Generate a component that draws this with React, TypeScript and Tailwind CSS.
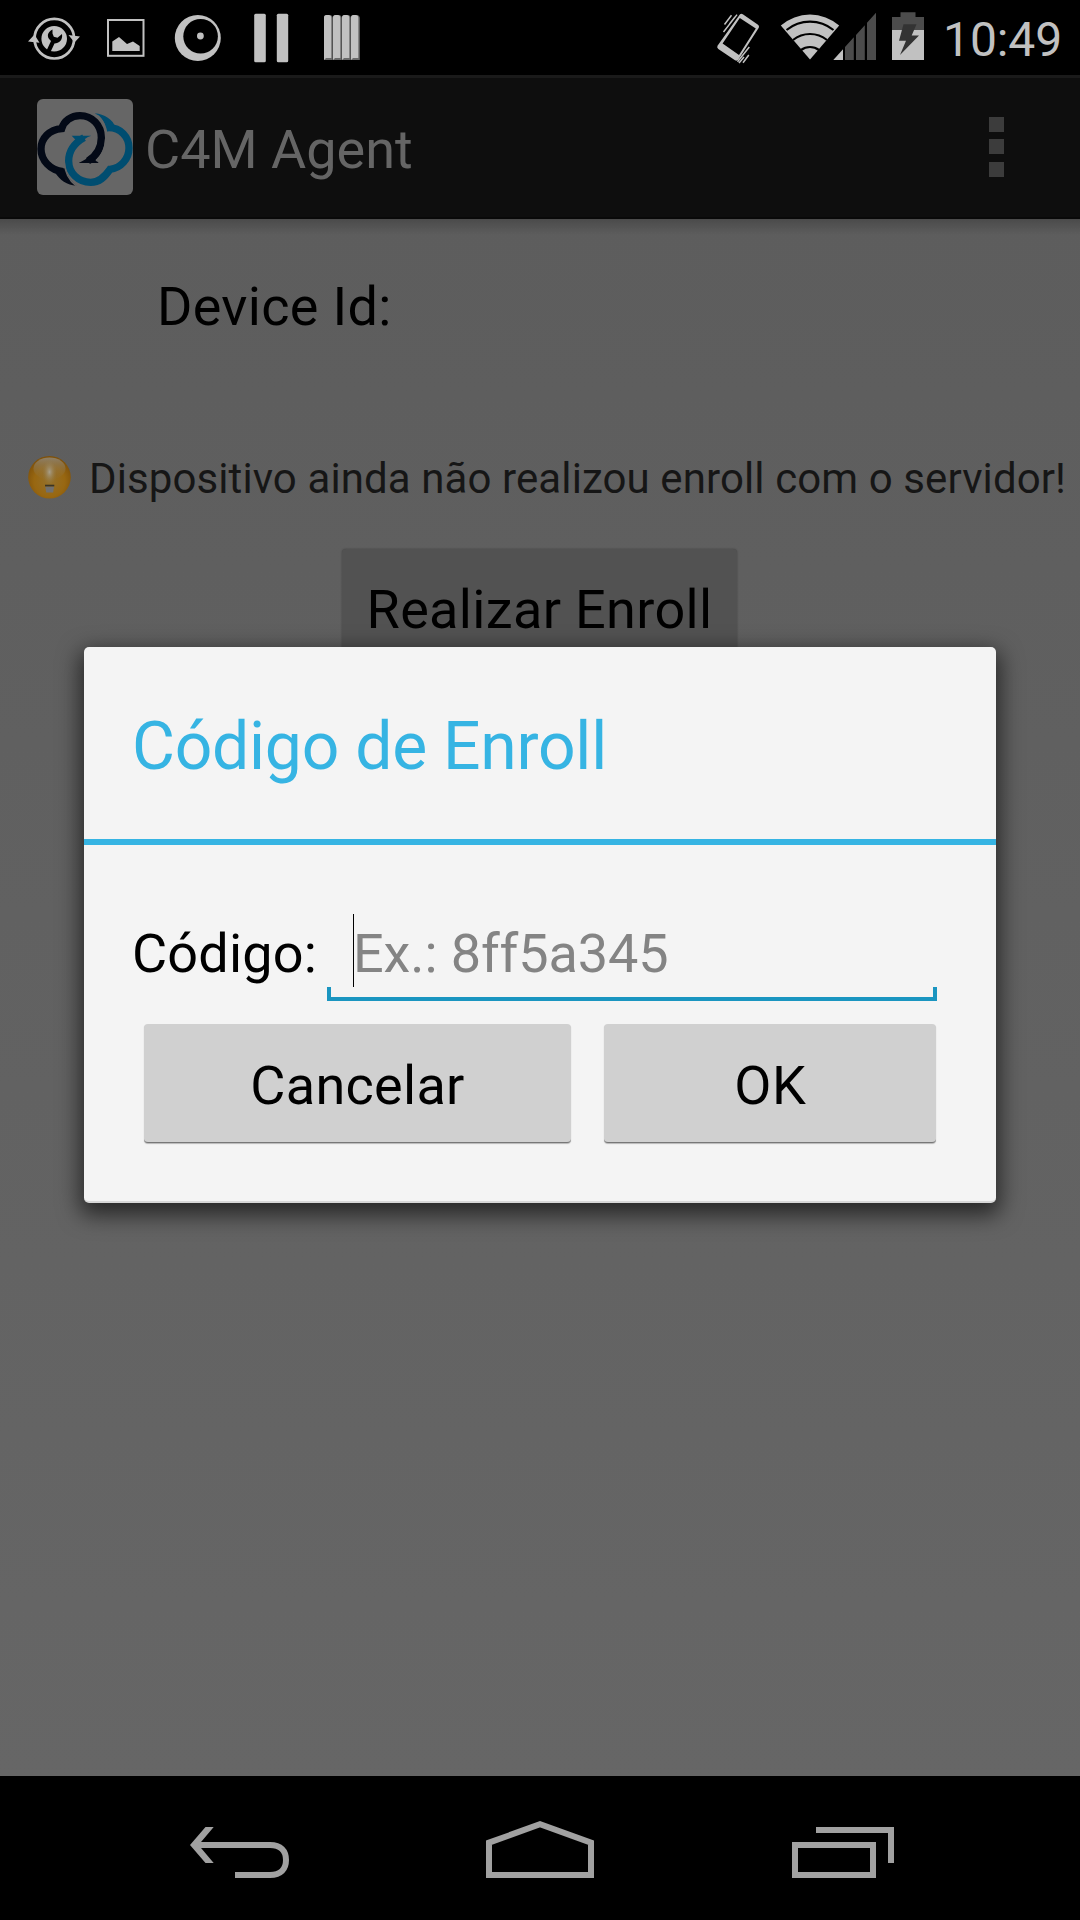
import React from "react";

const LIGHT = "#c1c1c1";
const DIM = "#4c4c4c";

function SyncToolIcon() {
  return (
    <svg viewBox="28 12 52 52" className="h-[52px] w-[52px]">
      <circle cx="54.3" cy="38.7" r="19.8" fill="none" stroke={LIGHT} strokeWidth="2.7" />
      <path d="M28 41.5 L34.5 34.5 L39.5 42.8 Z M68.5 35 L80 36.5 L74.5 42.5 Z" fill={LIGHT} />
      <circle cx="54.2" cy="38.7" r="12.8" fill={LIGHT} />
      <path
        d="M52.5 29.5 C47.5 32 46.5 36.5 49.8 39.8 L51 41 L46.8 50 L50.5 52 L54.5 43.5 C59 43.5 63 40 62 34 L57.5 37.8 L53.8 36.8 L52.5 33.5 Z"
        fill="#000"
      />
    </svg>
  );
}

function PictureIcon() {
  return (
    <svg viewBox="106 18 40 40" className="h-10 w-10">
      <rect x="108" y="20" width="35.5" height="35.8" fill="none" stroke={LIGHT} strokeWidth="2" />
      <path d="M112.3 51 V41.5 L119 37 L127 44 L133 41.5 L139.7 46 V51 Z" fill={LIGHT} />
    </svg>
  );
}

function OrbIcon() {
  return (
    <svg viewBox="174 13 48 48" className="h-12 w-12">
      <circle cx="197.8" cy="37" r="23" fill={LIGHT} />
      <circle cx="200.6" cy="35.3" r="17.3" fill="#000" />
      <circle cx="200.4" cy="35" r="3.4" fill={LIGHT} />
    </svg>
  );
}

function PauseIcon() {
  return (
    <svg viewBox="254 13 35 50" className="h-[50px] w-[35px]">
      <rect x="254.2" y="13.7" width="11.6" height="48.5" rx="1.5" fill={LIGHT} />
      <rect x="276.8" y="13.7" width="11.4" height="48.5" rx="1.5" fill={LIGHT} />
    </svg>
  );
}

function BooksIcon() {
  return (
    <svg viewBox="324 14 36 47" className="h-[47px] w-9">
      {[324, 333, 342, 351].map((x) => (
        <g key={x}>
          <path d={`M${x} 60 V17.5 Q${x} 15 ${x + 2.5} 15 H${x + 5.5} Q${x + 8.5} 15 ${x + 8.8} 18 V60 Z`} fill="#6a6a6a" />
          <path d={`M${x} 60 V17.5 Q${x} 15 ${x + 2.5} 15 H${x + 5} Q${x + 7.3} 15 ${x + 7.3} 17.5 V58 L${x + 2} 58 Z`} fill={LIGHT} />
        </g>
      ))}
    </svg>
  );
}

function VibrateIcon() {
  return (
    <svg viewBox="715 11 46 52" className="h-[52px] w-[46px]">
      <path
        fillRule="evenodd"
        fill={LIGHT}
        d="M740 13.2 Q741.3 12.4 742.8 13.3 L758 23.8 Q759.6 25 758.8 26.7 L738.4 58.5 Q737 60.3 735 59.3 L718.3 48 Q716.6 46.6 717.5 44.8 Z M739.8 17 L722.6 42.5 L739 54 L755.8 27.6 Z"
      />
      <path
        d="M731.5 14.2 L724.5 23.5 M737 13.6 L723.5 31 M729.5 23 L735 16 M749.3 46 L737.5 60.8 M748.8 54 L743 61.8 M744 56 L739 62"
        stroke={LIGHT}
        strokeWidth="1.5"
        fill="none"
      />
    </svg>
  );
}

function WifiIcon() {
  return (
    <svg viewBox="780 13 60 47" className="h-[47px] w-[60px]">
      <path d="M810 58.6 L780.8 24.5 A44.6 44.6 0 0 1 839.2 24.5 Z" fill={LIGHT} />
      <path
        d="M786.5 29 A37 37 0 0 1 833.5 29 M793 39 A27 27 0 0 1 827 39 M801 49 A15 15 0 0 1 819 49"
        stroke="#000"
        strokeWidth="2.2"
        fill="none"
      />
    </svg>
  );
}

function SignalIcon() {
  return (
    <svg viewBox="833 12 43 48" className="h-12 w-[43px]">
      <path d="M833.3 60 L843 49.2 V60 Z" fill={LIGHT} />
      <path
        d="M845 60 V47 L853.8 37.3 V60 Z M856 60 V35 L864.8 25.2 V60 Z M867 60 V22.8 L876 12.8 V60 Z"
        fill={DIM}
      />
    </svg>
  );
}

function BatteryIcon() {
  return (
    <svg viewBox="892 12 32 48" className="h-12 w-8">
      <path d="M892 17 H900.5 V12.3 H915.5 V17 H924 V30 H892 Z" fill={DIM} />
      <rect x="892" y="30" width="32" height="30" fill={LIGHT} />
      <path d="M903.5 24.3 H916.5 L911.7 35.5 H919 L900 55 L906 40.8 H899 Z" fill="#333333" />
    </svg>
  );
}

function StatusBar() {
  return (
    <div className="flex h-[75px] items-center bg-black">
      <div className="ml-7 flex items-center">
        <SyncToolIcon />
        <div className="ml-[26px]"><PictureIcon /></div>
        <div className="ml-7"><OrbIcon /></div>
        <div className="ml-8"><PauseIcon /></div>
        <div className="ml-[35px]"><BooksIcon /></div>
      </div>
      <div className="ml-auto flex items-center pr-[17px]">
        <VibrateIcon />
        <div className="ml-[19px] -mt-px"><WifiIcon /></div>
        <div className="-ml-[7px] -mt-[3px]"><SignalIcon /></div>
        <div className="ml-4 -mt-[3px]"><BatteryIcon /></div>
        <span className="ml-[19px] mt-1 w-[120px] whitespace-nowrap text-[48px] leading-[56px] tracking-[-0.1px] text-[#c1c1c1]">10:49</span>
      </div>
    </div>
  );
}

function CloudLogo() {
  return (
    <svg viewBox="111 72 288 288" className="h-24 w-24 rounded-md bg-[#666666]">
      <path
        d="M252 188 C224 204 206 228 206 258 C206 294 235 322 272 322 C298 322 314 306 330 283 C362 280 387 252 387 219 C387 186 362 158 326 158"
        fill="none"
        stroke="#004d70"
        strokeWidth="22"
      />
      <path d="M215 182 H274 C260 186 248 195 240 206 L230 198 Z" fill="#004d70" />
      <path d="M284 115 C314 118 338 132 348 160 L322 170 C317 146 306 127 284 115 Z" fill="#004d70" />
      <path
        d="M190 290 C150 286 123 255 123 222 C123 190 148 164 185 161 C192 138 213 122 240 122 C277 122 304 151 304 188 C304 218 288 243 264 258"
        fill="none"
        stroke="#030916"
        strokeWidth="22"
      />
      <path d="M164 290 C178 315 202 330 229 332 C212 318 202 304 195 280 Z" fill="#030916" />
      <path d="M236 264 C250 258 262 250 272 240 L280 248 L296 264 Z" fill="#030916" />
      <path
        d="M317 190 C316 222 302 246 288 258 M313 150 C308 138 302 128 292 121 M193 262 C195 296 208 318 228 332"
        fill="none"
        stroke="#666666"
        strokeWidth="4"
      />
    </svg>
  );
}

function ActionBar() {
  return (
    <div className="flex h-36 items-center border-t-[3px] border-t-[#1a1a1a] border-b-2 border-b-[#090909] bg-[#0e0e0e] pb-px pl-[37px] pr-[76px]">
      <CloudLogo />
      <span className="ml-[12px] mt-[5px] whitespace-nowrap text-[54px] leading-[64px] text-[#656565]">C4M Agent</span>
      <div className="-mt-px ml-auto flex flex-col gap-[7px]">
        <div className="size-[15px] bg-[#3c3c3c]" />
        <div className="size-[15px] bg-[#3c3c3c]" />
        <div className="mt-px size-[15px] bg-[#3c3c3c]" />
      </div>
    </div>
  );
}

function BulbIcon() {
  return (
    <svg viewBox="28 454 44 44" className="-mt-1 size-11">
      <defs>
        <radialGradient id="orb" cx="0.5" cy="0.6" r="0.6">
          <stop offset="0" stopColor="#94712c" />
          <stop offset="0.6" stopColor="#986711" />
          <stop offset="1" stopColor="#7c4f0a" />
        </radialGradient>
        <linearGradient id="gloss" x1="0" y1="0" x2="0" y2="1">
          <stop offset="0" stopColor="#8f826c" stopOpacity="0.95" />
          <stop offset="1" stopColor="#8f7038" stopOpacity="0.1" />
        </linearGradient>
        <radialGradient id="glow" cx="0.5" cy="0.5" r="0.5">
          <stop offset="0" stopColor="#aaa494" stopOpacity="0.9" />
          <stop offset="1" stopColor="#8f7440" stopOpacity="0" />
        </radialGradient>
      </defs>
      <circle cx="49.5" cy="476.2" r="21.3" fill="url(#orb)" />
      <ellipse cx="49.5" cy="467.5" rx="16" ry="11" fill="url(#gloss)" />
      <ellipse cx="49.5" cy="471" rx="7.5" ry="13" fill="url(#glow)" />
      <path d="M45.3 485.5 H54 L53.2 491.5 H46.2 Z" fill="#707070" />
      <path d="M45 483.7 H54.3 V485.4 H45 Z" fill="#3b3423" />
    </svg>
  );
}

function HoloButton({ className, children }: { className: string; children: React.ReactNode }) {
  return (
    <button className={`flex h-[119px] shrink-0 items-center justify-center rounded-[4px] text-[54px] leading-[64px] text-black ${className}`}>
      {children}
    </button>
  );
}

function EnrollDialog() {
  return (
    <div className="absolute left-[84px] top-[647px] flex h-[556px] w-[912px] flex-col rounded-[5px] border-b-2 border-b-[#d8d8d8] bg-[#f4f4f4] shadow-[0_8px_22px_4px_rgba(0,0,0,0.6)]">
      <h2 className="flex h-[192px] items-center pl-12 pt-[7px] text-[66px] leading-[78px] tracking-[-0.25px] text-[#36b4e3]">Código de Enroll</h2>
      <div className="h-[6px] shrink-0 bg-[#36b4e3]" />
      <div className="mt-[62px] flex h-[94px] items-center pl-12">
        <label className="w-[195px] whitespace-nowrap text-[54px] leading-[64px] tracking-[0.2px] text-black">Código:</label>
        <div className="relative flex h-[94px] w-[610px] items-center pl-[26px]">
          <div className="-mt-[7px] h-[73px] w-px bg-black" />
          <span className="-ml-px whitespace-nowrap text-[54px] leading-[64px] tracking-[-0.1px] text-[#848484]">Ex.: 8ff5a345</span>
          <div className="absolute bottom-0 left-0 h-[14px] w-full border-x-4 border-b-4 border-[#1a95c0]" />
        </div>
      </div>
      <div className="mt-[23px] flex gap-[33px] pl-[60px]">
        <HoloButton className="w-[427px] border-b-[1.5px] border-b-[#777777] bg-[#d0d0d0] pt-1.5 tracking-[0.3px] shadow-[0_1px_1px_rgba(0,0,0,0.25)]">Cancelar</HoloButton>
        <HoloButton className="w-[332px] border-b-[1.5px] border-b-[#777777] bg-[#d0d0d0] pl-px pt-1.5 tracking-[0.8px] shadow-[0_1px_1px_rgba(0,0,0,0.25)]">OK</HoloButton>
      </div>
    </div>
  );
}

function NavBar() {
  return (
    <div className="flex h-36 items-center bg-black pl-[190px] pt-1">
      <svg viewBox="190 1820 100 60" className="h-[60px] w-[100px]">
        <path d="M198 1845 H270 C281 1845 286 1851 286 1860 C286 1869 281 1875 270 1875 H235" fill="none" stroke="#a1a1a1" strokeWidth="6" />
        <path d="M190 1845 L205.5 1827 H213.7 L198.5 1845 L213.7 1863 H205.5 Z" fill="#a1a1a1" />
      </svg>
      <svg viewBox="486 1820 108 60" className="ml-[196px] h-[60px] w-[108px]">
        <path d="M489 1842.6 L540 1824.3 L591 1842.6 V1875 H489 Z" fill="none" stroke="#a1a1a1" strokeWidth="6" />
      </svg>
      <svg viewBox="792 1820 102 60" className="ml-[198px] h-[60px] w-[102px]">
        <rect x="795" y="1845" width="78" height="30" fill="none" stroke="#a1a1a1" strokeWidth="6" />
        <path d="M816 1830 H891 V1863" fill="none" stroke="#a1a1a1" strokeWidth="6" />
      </svg>
    </div>
  );
}

export default function App() {
  return (
    <div className="relative flex h-[1920px] w-[1080px] flex-col overflow-hidden font-['Roboto',sans-serif]">
      <StatusBar />
      <ActionBar />
      <main className="flex h-[1557px] flex-col bg-linear-to-b from-[#5d5d5d] to-[#666666]">
        <div className="h-4 shrink-0 bg-linear-to-b from-black/20 to-transparent" />
        <p className="ml-[157px] mt-10 text-[54px] leading-[64px] tracking-[0.3px] text-black">Device Id:</p>
        <div className="mt-[115px] flex h-[50px] items-center pl-7">
          <BulbIcon />
          <p className="ml-[17px] whitespace-nowrap text-[42px] leading-[50px] tracking-[0.1px] text-[#161616]">
            Dispositivo ainda não realizou enroll com o servidor!
          </p>
        </div>
        <HoloButton className="ml-[342px] mt-[45px] w-[395px] bg-[#525252] pt-0.5 tracking-[0.35px] shadow-[0_0_2px_rgba(0,0,0,0.35)]">Realizar Enroll</HoloButton>
      </main>
      <NavBar />
      <EnrollDialog />
    </div>
  );
}
